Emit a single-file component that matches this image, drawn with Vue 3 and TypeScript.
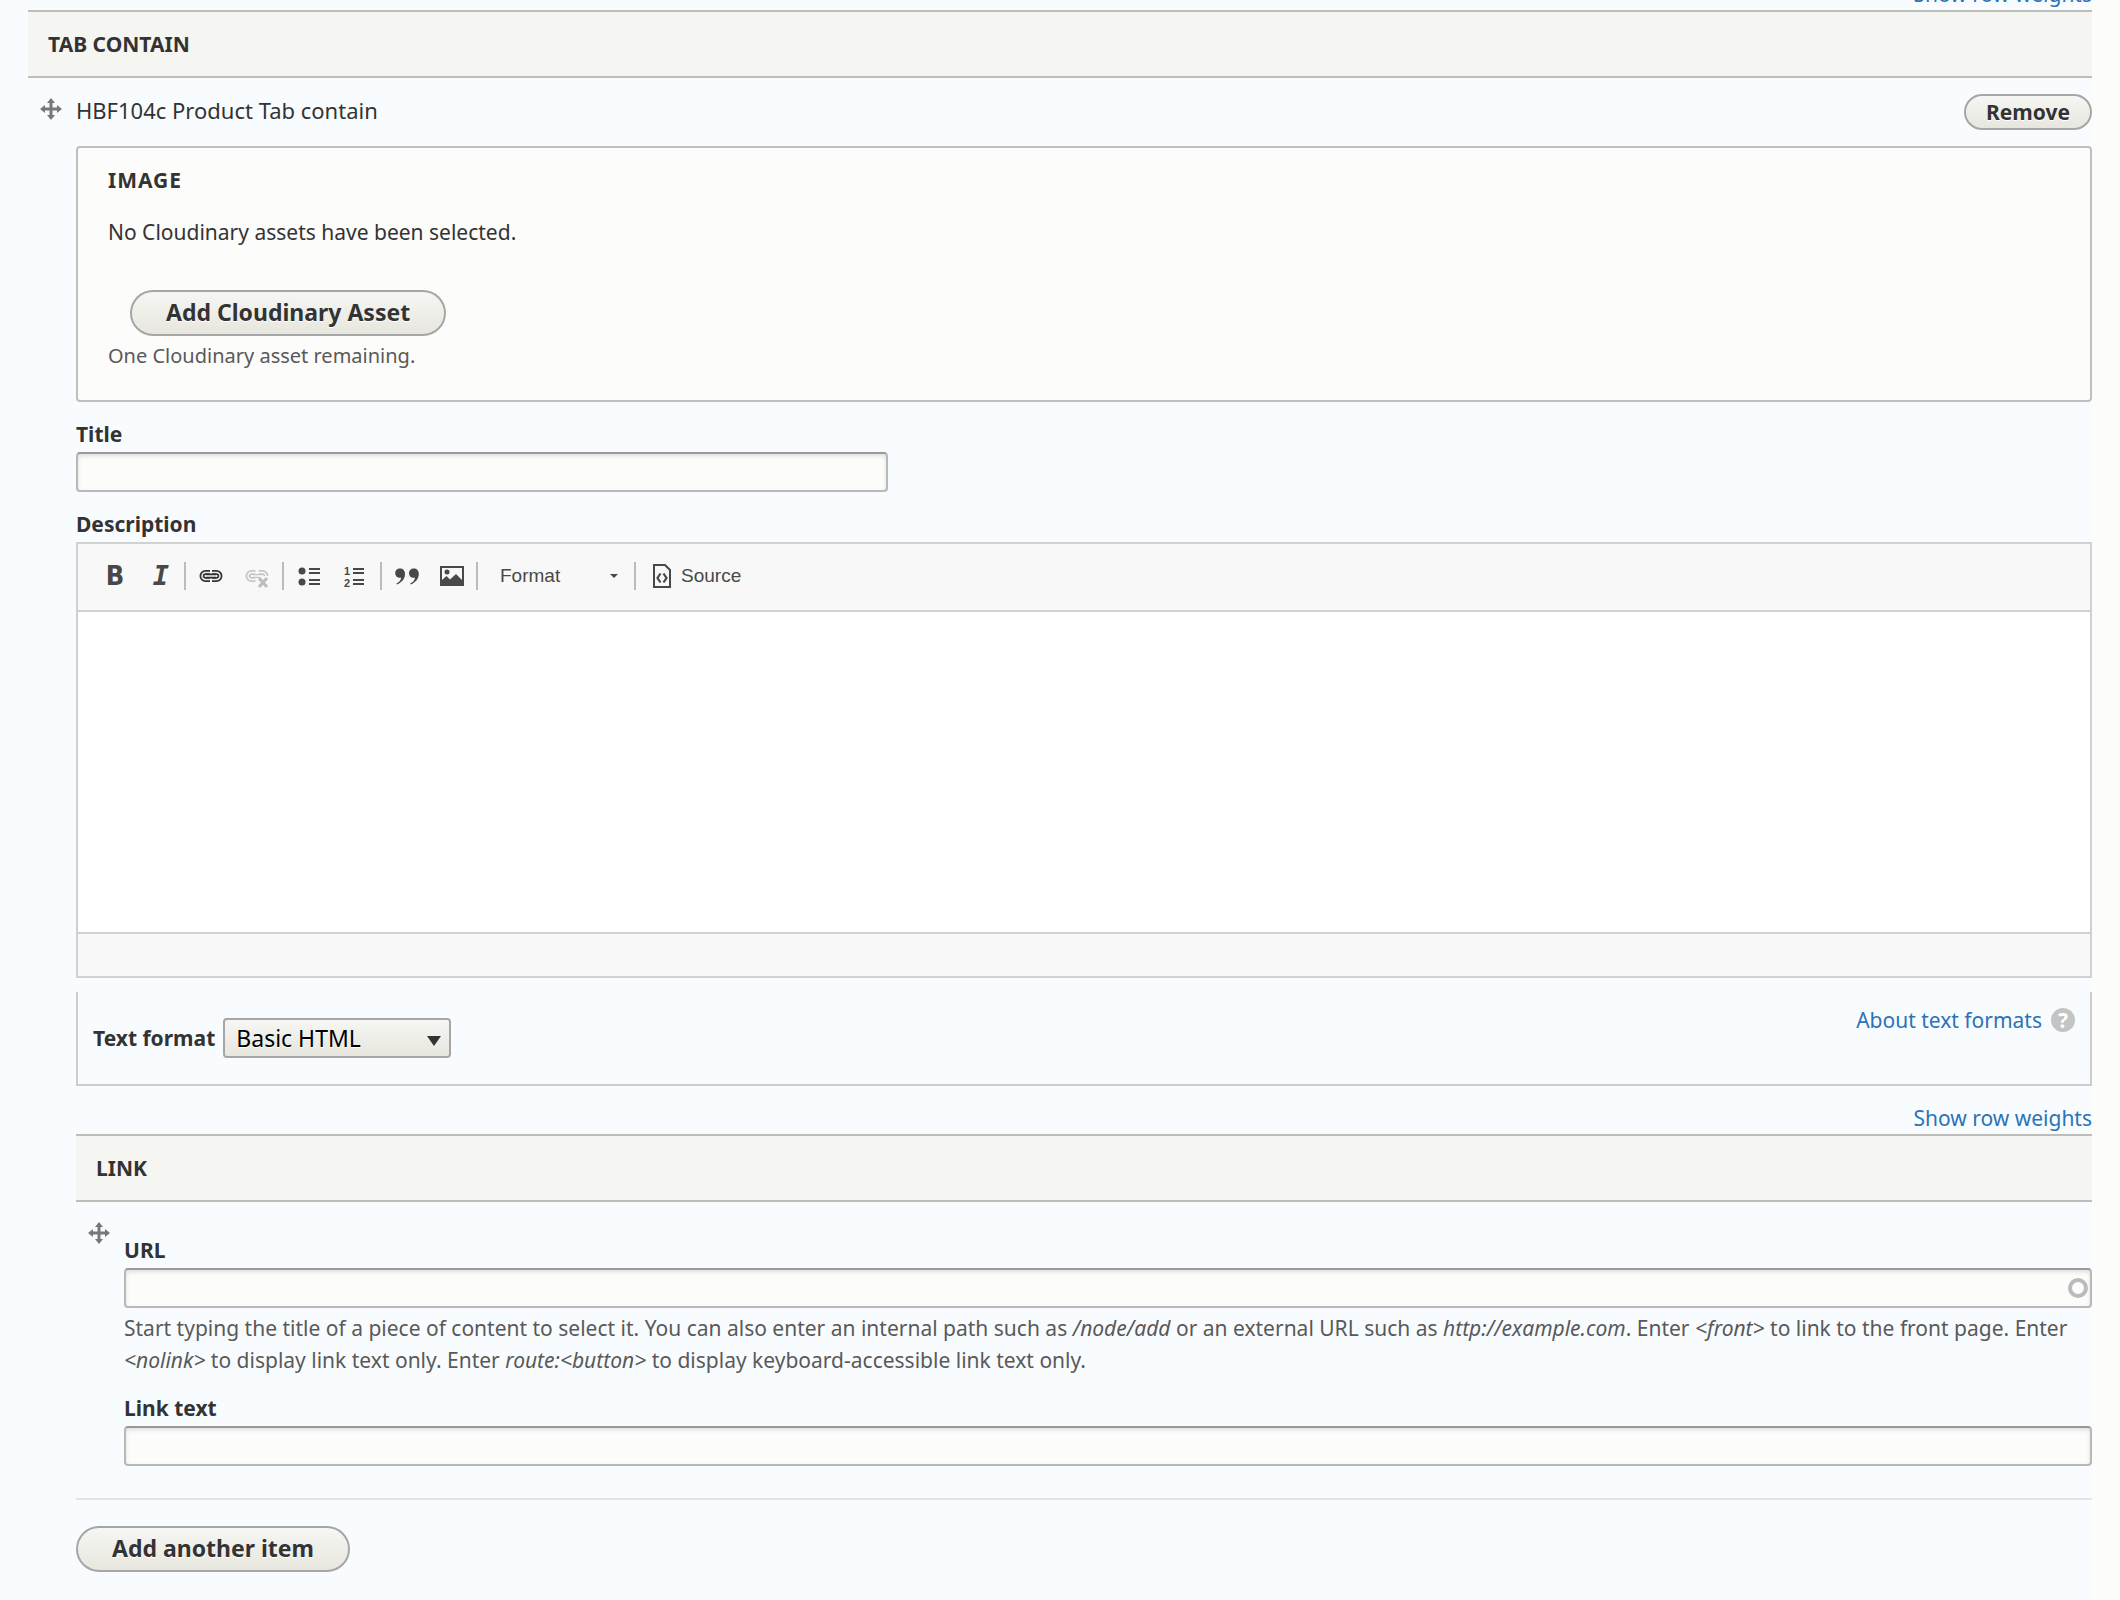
<script setup lang="ts">
import { ref } from 'vue'

const title = ref('')
const description = ref('')
const textFormat = ref('Basic HTML')
const url = ref('')
const linkText = ref('')
</script>

<template>
  <main class="page">
    <div class="weights"><a href="#tabs">Show row weights</a></div>
    <h3 id="tabs" class="bar">TAB CONTAIN</h3>

    <div class="row">
      <a class="handle" href="#tabs" aria-label="Drag to re-order">
        <svg width="22" height="22" viewBox="0 0 22 22" fill="#787878">
          <path d="M11 0l4 5h-2.500v4.500H17V7l5 4-5 4v-2.500h-4.500V17H15l-4 5-4-5h2.500v-4.500H5V15l-5-4 5-4v2.500h4.500V5H7z" />
        </svg>
      </a>
      <div class="content">
        <div class="row-head">
          <span class="row-title">HBF104c Product Tab contain</span>
          <button type="button" class="btn small">Remove</button>
        </div>

        <section class="box">
          <h4 class="legend">IMAGE</h4>
          <p class="empty">No Cloudinary assets have been selected.</p>
          <button type="button" class="btn asset">Add Cloudinary Asset</button>
          <p class="remaining">One Cloudinary asset remaining.</p>
        </section>

        <div class="field">
          <label for="title">Title</label>
          <input id="title" v-model="title" class="text short" type="text" />
        </div>

        <div class="field">
          <label for="description">Description</label>
          <div class="editor">
            <div class="toolbar">
              <div class="group">
                <button type="button" class="tool bold" aria-label="Bold">B</button>
                <button type="button" class="tool italic" aria-label="Italic">I</button>
              </div>
              <div class="group">
                <button type="button" class="tool" aria-label="Link">
                  <svg width="24" height="24" viewBox="0 0 24 24" fill="none">
                    <path d="M11 8.500H6.500a3.500 3.500 0 0 0 0 7H11M13 8.500h4.500a3.500 3.500 0 0 1 0 7H13" stroke="#333" stroke-width="5" />
                    <path d="M12 8.500H6.500a3.500 3.500 0 0 0 0 7H12M12 8.500h5.500a3.500 3.500 0 0 1 0 7H12" stroke="#f0f0f0" stroke-width="1.500" />
                    <path d="M7 12h10" stroke="#333" stroke-width="5" />
                    <path d="M7 12h10" stroke="#f0f0f0" stroke-width="1.500" />
                  </svg>
                </button>
                <button type="button" class="tool" aria-label="Unlink" disabled>
                  <svg width="24" height="24" viewBox="0 0 24 24" fill="none">
                    <path d="M10.500 8.500H6.500a3.500 3.500 0 0 0 0 7H10.500M13.500 8.500h4a3.500 3.500 0 0 1 3.500 3.500" stroke="#c6c6c6" stroke-width="5" />
                    <path d="M11 8.500H6.500a3.500 3.500 0 0 0 0 7H11M13 8.500h4.500a3.500 3.500 0 0 1 3.500 3.500" stroke="#f8f8f8" stroke-width="1.500" />
                    <path d="M7 12h10" stroke="#c6c6c6" stroke-width="4" />
                    <path d="M7 12h10" stroke="#f8f8f8" stroke-width="1.500" />
                    <path d="M14 14l8 9M22 14l-8 9" stroke="#f8f8f8" stroke-width="6" />
                    <path d="M14 14l8 9M22 14l-8 9" stroke="#bdbdbd" stroke-width="3" />
                  </svg>
                </button>
              </div>
              <div class="group">
                <button type="button" class="tool" aria-label="Bulleted list">
                  <svg width="24" height="24" viewBox="0 0 24 24" fill="#484848">
                    <circle cx="5" cy="7" r="3.500" />
                    <circle cx="5" cy="18" r="3.500" />
                    <path d="M12 4h11v2H12zM12 8h11v2H12zM12 15h11v2H12zM12 19h11v2H12z" />
                  </svg>
                </button>
                <button type="button" class="tool" aria-label="Numbered list">
                  <svg width="24" height="24" viewBox="0 0 24 24" fill="#484848">
                    <text x="1" y="11" class="digit">1</text>
                    <text x="1" y="23" class="digit">2</text>
                    <path d="M10 4h11v2H10zM10 8h11v2H10zM10 15h11v2H10zM10 19h11v2H10z" />
                  </svg>
                </button>
              </div>
              <div class="group tight">
                <button type="button" class="tool" aria-label="Block quote">
                  <svg width="24" height="24" viewBox="0 0 24 24" fill="#484848">
                    <path d="M5 4.500c3 0 5 2 5 5.500 0 5-3.500 8.500-8 10.500l-.5-1C4.500 18 6 16 6.200 13.500 3 14.500.2 12.500.2 9.300.2 6.500 2.300 4.500 5 4.500zM18.800 4.500c3 0 5 2 5 5.500 0 5-3.500 8.500-8 10.500l-.5-1c3-1.500 4.500-3.500 4.700-6-3.200 1-6-1-6-4.200 0-2.800 2.100-4.800 4.800-4.800z" />
                  </svg>
                </button>
                <button type="button" class="tool" aria-label="Image">
                  <svg width="24" height="24" viewBox="0 0 24 24">
                    <rect x="1" y="3" width="22" height="18" fill="#f8f8f8" stroke="#484848" stroke-width="2" />
                    <circle cx="7" cy="8" r="2.500" fill="#484848" />
                    <path d="M2 20v-4l4.500-4 3.500 3.500 6-5.500 6 6v4z" fill="#484848" />
                  </svg>
                </button>
              </div>
              <div class="group">
                <button type="button" class="combo">
                  Format
                  <svg width="8" height="4" viewBox="0 0 8 4"><path d="M0 0h8L4 4z" fill="#484848" /></svg>
                </button>
              </div>
              <div class="group">
                <button type="button" class="source">
                  <svg width="18" height="24" viewBox="0 0 18 24" fill="none" stroke="#484848">
                    <path d="M1 1h11l5 5v17H1z" stroke-width="2" />
                    <path d="M7.500 9.500L4.500 14l3 4.500M10.500 9.500l3 4.500-3 4.500" stroke-width="2.200" />
                  </svg>
                  Source
                </button>
              </div>
            </div>
            <textarea id="description" v-model="description" class="area"></textarea>
            <div class="status"></div>
          </div>
        </div>

        <div class="formats">
          <div class="format-pick">
            <label for="format">Text format</label>
            <div class="select">
              <select id="format" v-model="textFormat">
                <option>Basic HTML</option>
                <option>Full HTML</option>
              </select>
              <svg class="arrow" width="14" height="10" viewBox="0 0 14 10"><path d="M0 0h14L7 10z" fill="#333" /></svg>
            </div>
          </div>
          <a class="about" href="#formats">About text formats <span class="q" aria-hidden="true">?</span></a>
        </div>

        <div class="weights second"><a href="#link">Show row weights</a></div>
        <h3 id="link" class="bar">LINK</h3>
        <div class="row">
          <a class="handle" href="#link" aria-label="Drag to re-order">
            <svg width="22" height="22" viewBox="0 0 22 22" fill="#787878">
              <path d="M11 0l4 5h-2.500v4.500H17V7l5 4-5 4v-2.500h-4.500V17H15l-4 5-4-5h2.500v-4.500H5V15l-5-4 5-4v2.500h4.500V5H7z" />
            </svg>
          </a>
          <div class="content link-fields">
            <div class="field">
              <label for="url">URL</label>
              <div class="auto">
                <input id="url" v-model="url" class="text" type="text" />
                <span class="ring"></span>
              </div>
              <p class="help">
                Start typing the title of a piece of content to select it. You can also enter an internal path such as
                <em>/node/add</em> or an external URL such as <em>http://example.com</em>. Enter
                <em>&lt;front&gt;</em> to link to the front page. Enter <em>&lt;nolink&gt;</em> to display link text
                only. Enter <em>route:&lt;button&gt;</em> to display keyboard-accessible link text only.
              </p>
            </div>
            <div class="field">
              <label for="link-text">Link text</label>
              <input id="link-text" v-model="linkText" class="text" type="text" />
            </div>
          </div>
        </div>
        <hr class="rule" />
        <button type="button" class="btn">Add another item</button>
      </div>
    </div>
  </main>
</template>

<style>
body {
  background: #fcfcfa;
}
</style>

<style scoped>
.page {
  box-sizing: border-box;
  display: flow-root;
  min-height: 100vh;
  margin-right: 28px;
  padding-left: 28px;
  background: #f8fcff;
  color: #333;
  font: 21px/32px "Noto Sans", "Open Sans", sans-serif;
}
h3,
h4,
p {
  margin: 0;
  font-size: inherit;
}
a {
  color: #2b73b9;
  text-decoration: none;
}
.weights {
  margin-top: -22px;
  text-align: right;
}
.weights.second {
  margin-top: 16px;
}
.bar {
  padding-left: 20px;
  border-top: 2px solid #bfbfba;
  border-bottom: 2px solid #bfbfba;
  background: #f5f5f2;
  line-height: 64px;
  font-weight: 700;
}
.row {
  display: flex;
}
.handle {
  flex: none;
  width: 36px;
  padding: 20px 0 0 12px;
}
.handle svg {
  display: block;
}
.content {
  flex: 1;
  min-width: 0;
  padding-top: 16px;
}
.link-fields {
  padding-bottom: 32px;
}
.row-head {
  display: flex;
  justify-content: space-between;
  align-items: flex-start;
  margin-bottom: 16px;
}
.row-title {
  font-size: 22px;
}
.btn {
  box-sizing: border-box;
  height: 46px;
  padding: 0 34px 2px;
  border: 2px solid #a6a6a6;
  border-radius: 23px;
  background: linear-gradient(#f6f6f3, #e7e7df);
  color: #333;
  font: 700 23px/32px "Noto Sans", "Open Sans", sans-serif;
  text-shadow: 0 1px #fff;
}
.btn.small {
  height: 36px;
  padding: 0 20px;
  font-size: 21px;
}
.box {
  padding: 16px 30px 28px;
  border: 2px solid #bfbfbf;
  border-radius: 4px;
  background: #fcfcfa;
}
.legend {
  font-weight: 700;
  letter-spacing: 1px;
}
.empty {
  margin-top: 20px;
}
.asset {
  display: block;
  margin: 42px 0 4px 22px;
}
.remaining {
  color: #595959;
  font-size: 20px;
}
.help {
  margin-top: 4px;
  color: #595959;
}
.field {
  margin-top: 16px;
}
label {
  display: block;
  font-weight: 700;
}
.text {
  box-sizing: border-box;
  display: block;
  width: 100%;
  height: 40px;
  margin-top: 2px;
  padding: 4px 12px;
  border: 2px solid #b8b8b8;
  border-top-color: #999;
  border-radius: 4px;
  background: #fcfcfa;
  box-shadow: inset 0 2px 4px rgba(0, 0, 0, 0.12);
  color: #333;
  font: inherit;
}
.short {
  max-width: 812px;
}
.auto {
  position: relative;
}
.ring {
  position: absolute;
  top: 10px;
  right: 4px;
  box-sizing: border-box;
  width: 20px;
  height: 20px;
  border: 4px solid #bbb;
  border-radius: 50%;
}
.editor {
  margin-top: 2px;
  border: 2px solid #d1d1d1;
}
.toolbar {
  box-sizing: border-box;
  display: flex;
  align-items: center;
  height: 68px;
  padding: 0 0 2px 8px;
  border-bottom: 2px solid #d1d1d1;
  background: #f8f8f8;
}
.group {
  display: flex;
  align-items: center;
  height: 28px;
  padding: 0 2px;
  border-left: 2px solid #bcbcbc;
}
.group:first-child {
  padding: 0 0 0 4px;
  border-left-color: transparent;
}
.tool,
.combo,
.source {
  display: flex;
  align-items: center;
  justify-content: center;
  width: 46px;
  height: 28px;
  padding: 0;
  border: 0;
  background: none;
  color: #484848;
}
.tight .tool {
  width: 45px;
}
.bold {
  font: bold 27px/28px "DejaVu Sans Condensed", "DejaVu Sans", sans-serif;
}
.italic {
  font: italic bold 27px/28px "DejaVu Sans Mono", monospace;
}
.digit {
  font: bold 11px "Liberation Sans", sans-serif;
}
.combo {
  justify-content: space-between;
  width: 152px;
  padding: 0 14px 0 20px;
  font: 19px/28px "Liberation Sans", Arial, sans-serif;
}
.source {
  gap: 10px;
  width: auto;
  padding: 0 15px;
  font: 19px/28px "Liberation Sans", Arial, sans-serif;
}
.area {
  box-sizing: border-box;
  display: block;
  width: 100%;
  height: 320px;
  padding: 20px;
  border: 0;
  background: #fff;
  font: inherit;
  resize: none;
}
.status {
  height: 42px;
  border-top: 2px solid #d1d1d1;
  background: #f8f8f8;
}
.formats {
  display: flex;
  justify-content: space-between;
  align-items: flex-start;
  margin-top: 14px;
  padding: 0 15px;
  border: 2px solid #ccc;
  border-top: 0;
}
.format-pick {
  display: flex;
  align-items: center;
  gap: 8px;
  padding: 26px 0;
}
.select {
  position: relative;
}
select {
  box-sizing: border-box;
  display: block;
  width: 228px;
  height: 40px;
  padding: 0 36px 0 11px;
  appearance: none;
  border: 2px solid #a6a6a6;
  border-radius: 4px;
  background: linear-gradient(#f6f6f3, #e7e7df);
  color: #000;
  font: 23px/32px "Noto Sans", "Open Sans", sans-serif;
  text-shadow: 0 1px #fff;
}
.arrow {
  position: absolute;
  top: 18px;
  right: 10px;
  pointer-events: none;
}
.about {
  display: flex;
  align-items: center;
  gap: 9px;
  padding-top: 12px;
}
.q {
  width: 24px;
  height: 24px;
  border-radius: 50%;
  background: #c4c4c4;
  color: #fff;
  font-weight: 700;
  line-height: 24px;
  text-align: center;
}
.rule {
  height: 2px;
  margin: 0 0 26px;
  border: 0;
  background: #e6e4df;
}
</style>
